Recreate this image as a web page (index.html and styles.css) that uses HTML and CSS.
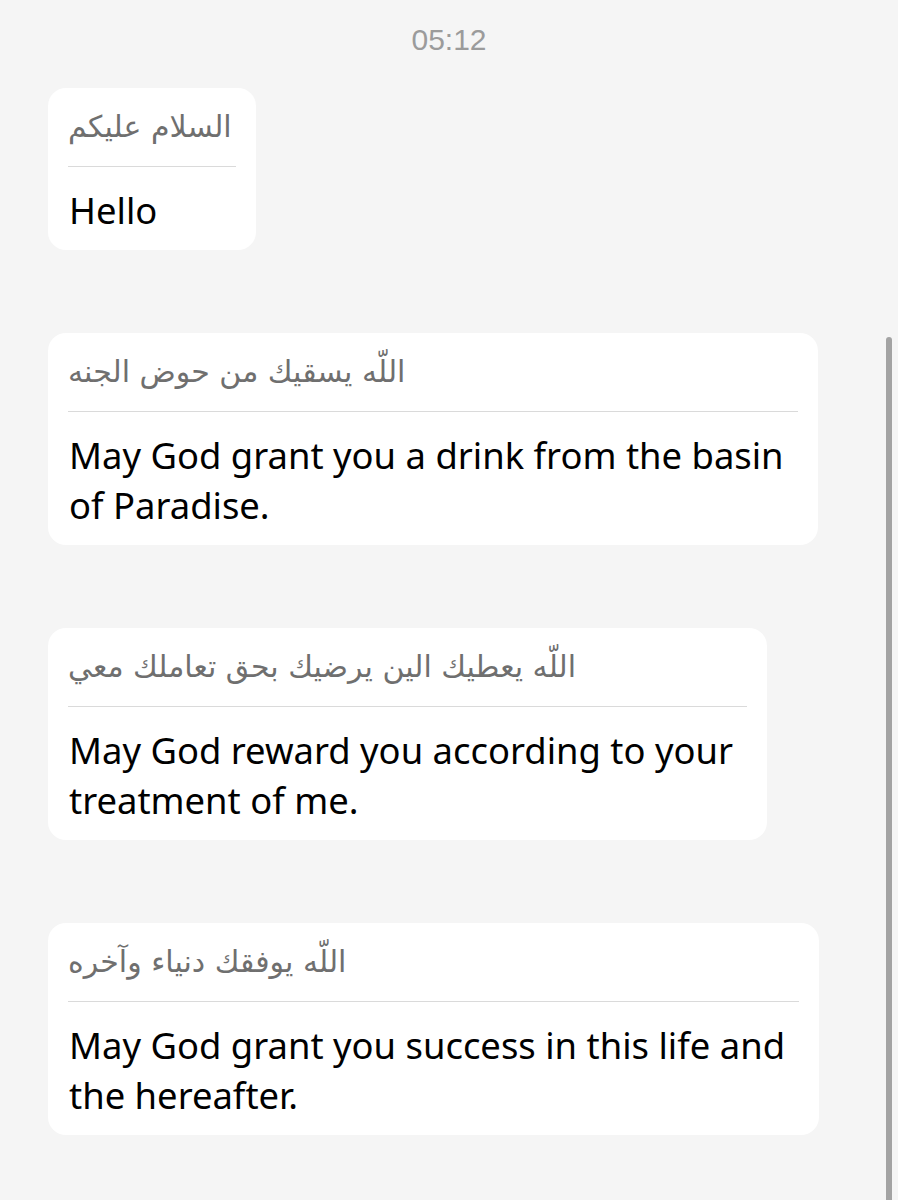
FILE: index.html
```html
<!DOCTYPE html>
<html lang="en">
<head>
    <meta charset="UTF-8">
    <meta name="viewport" content="width=device-width, initial-scale=1.0">
    <title>Translations</title>
    <link rel="stylesheet" href="styles.css">
</head>
<body>

<div class="chat">
    <div class="time">05:12</div>

    <div class="msg">
        <div class="src" lang="ar">السلام عليكم</div>
        <div class="tr">Hello</div>
    </div>

    <div class="msg">
        <div class="src" lang="ar">اللّه يسقيك من حوض الجنه</div>
        <div class="tr">May God grant you a drink from the basin<br>of Paradise.</div>
    </div>

    <div class="msg">
        <div class="src" lang="ar">اللّه يعطيك الين يرضيك بحق تعاملك معي</div>
        <div class="tr">May God reward you according to your<br>treatment of me.</div>
    </div>

    <div class="msg">
        <div class="src" lang="ar">اللّه يوفقك دنياء وآخره</div>
        <div class="tr">May God grant you success in this life and<br>the hereafter.</div>
    </div>
</div>

<div class="scrollbar"></div>

</body>
</html>
```

FILE: styles.css
```css
/* Base Styles */
body {
    margin: 0;
    background: #f5f5f5;
    font-family: 'Noto Sans', 'DejaVu Sans', sans-serif;
    height: 1200px;
    overflow: hidden;
}
.chat {
    display: flex;
    flex-direction: column;
    align-items: flex-start;
    gap: 83px;
    padding: 20px 48px 0;
}
.time {
    align-self: stretch;
    text-align: center;
    font-family: 'Liberation Sans', Arial, sans-serif;
    font-size: 30px;
    line-height: 40px;
    color: #9b9b9b;
    margin-bottom: -55px;
}
.msg {
    background: #fff;
    border-radius: 18px;
    padding: 0 20px 15px;
}
.src {
    font-family: 'DejaVu Sans', sans-serif;
    font-size: 30px;
    line-height: 44px;
    color: #6f6f6f;
    padding: 17px 4px 17px 0;
    border-bottom: 1px solid #dadada;
    text-align: left;
    white-space: nowrap;
}
.tr {
    font-size: 36.4px;
    line-height: 50px;
    color: #000;
    padding: 18px 14px 0 1px;
    white-space: nowrap;
}
.scrollbar {
    position: fixed;
    top: 337px;
    right: 6px;
    bottom: 0;
    width: 6px;
    border-radius: 3px 3px 0 0;
    background: #a3a3a3;
}
```
